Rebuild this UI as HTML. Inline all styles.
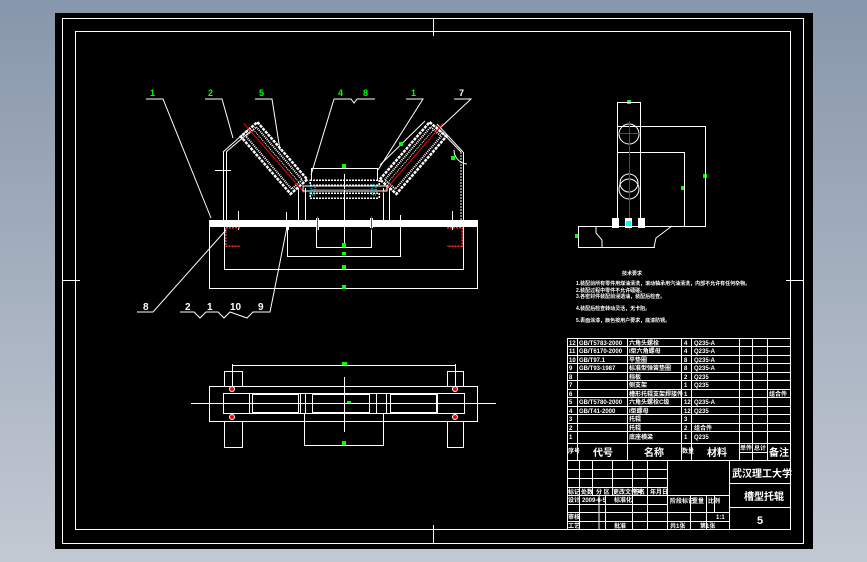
<!DOCTYPE html>
<html><head><meta charset="utf-8">
<style>
html,body{margin:0;padding:0;width:867px;height:562px;overflow:hidden;background:linear-gradient(#8797ab,#c3c9d3);}
svg{position:absolute;left:0;top:0;}
text{font-family:"Liberation Sans","Noto Sans CJK SC",sans-serif;font-weight:bold;}
</style></head><body>
<svg width="867" height="562" viewBox="0 0 867 562" xmlns="http://www.w3.org/2000/svg">
<rect x="55" y="13" width="758" height="536" fill="#000"/>
<g fill="none" stroke="#fff" stroke-width="1" shape-rendering="crispEdges">
<rect x="62.5" y="18.5" width="741" height="525"/>
<rect x="75.5" y="31.5" width="715" height="498"/>
<line x1="433.5" y1="18" x2="433.5" y2="36"/>
<line x1="433.5" y1="525" x2="433.5" y2="544"/>
<line x1="62" y1="280.5" x2="80" y2="280.5"/>
<line x1="786" y1="280.5" x2="804" y2="280.5"/>

<rect x="209.5" y="220.5" width="268" height="6" fill="#fff"/>
<line x1="209.5" y1="227" x2="209.5" y2="289"/>
<line x1="477.5" y1="227" x2="477.5" y2="289"/>
<line x1="209" y1="288.5" x2="478" y2="288.5"/>
<line x1="224.5" y1="227" x2="224.5" y2="270"/>
<line x1="463.5" y1="227" x2="463.5" y2="270"/>
<line x1="224" y1="269.5" x2="464" y2="269.5"/>
<line x1="287.5" y1="227" x2="287.5" y2="257"/>
<line x1="400.5" y1="215" x2="400.5" y2="257"/>
<line x1="287" y1="256.5" x2="401" y2="256.5"/>
<line x1="316.5" y1="227" x2="316.5" y2="248"/>
<line x1="371.5" y1="227" x2="371.5" y2="248"/>
<line x1="316" y1="247.5" x2="372" y2="247.5"/>
<line x1="344.5" y1="174" x2="344.5" y2="246"/>
<line x1="223.5" y1="152" x2="223.5" y2="220"/>
<line x1="226.5" y1="152" x2="226.5" y2="220"/>
<line x1="463.5" y1="152" x2="463.5" y2="220"/>
<line x1="461" y1="152" x2="461" y2="220" stroke-dasharray="2 1"/>
<line x1="215" y1="170.5" x2="231" y2="170.5"/>
<line x1="298.5" y1="188" x2="298.5" y2="220"/>
<line x1="305.5" y1="188" x2="305.5" y2="220"/>
<line x1="383.5" y1="188" x2="383.5" y2="220"/>
<line x1="389.5" y1="188" x2="389.5" y2="220"/>
<line x1="311.5" y1="168" x2="311.5" y2="180"/>
<line x1="311" y1="168.5" x2="378" y2="168.5"/>
<line x1="377.5" y1="168" x2="377.5" y2="180"/>
<line x1="238.5" y1="211" x2="238.5" y2="230"/>
<line x1="452.5" y1="211" x2="452.5" y2="230"/>
<line x1="286.5" y1="212" x2="286.5" y2="230"/>
</g>
<g fill="none" stroke="#fff" stroke-width="1">
<polyline points="223,152 250,128"/>
<polyline points="226,152 252,130"/>
<polyline points="463,152 437,124"/>
<polyline points="461,152 436,126"/>
<polyline points="380,165 425,121"/>
<polyline points="146,99 163,99 211,218"/>
<polyline points="205,99 222,99 233,138"/>
<polyline points="255,99 272,99 280,150"/>
<polyline points="334,99 351,99 354,103 357,99 375,99"/>
<polyline points="334,99 311,175"/>
<polyline points="406,99 423,99 378,170"/>
<polyline points="454,99 471,99 440,128"/>
<polyline points="137,312 153,312 226,230"/>
<polyline points="180,312 194,312 200,318 206,312 218,312 224,318 230,312 247,318 253,312 270,312 287,227"/>
<path d="M454,150 a14,14 0 0 0 13,14"/>
</g>
<g transform="translate(274,158) rotate(49)">
<rect x="-38" y="-11" width="76" height="22" fill="none" stroke="#fff" stroke-width="2.5" stroke-dasharray="3 1"/>
<rect x="-35" y="-7" width="70" height="14" fill="none" stroke="#fff" stroke-width="2" stroke-dasharray="1 1"/>
<line x1="-35" y1="-3" x2="35" y2="-3" stroke="#fff" stroke-width="1" stroke-dasharray="1 1"/>
<line x1="-46" y1="0" x2="46" y2="0" stroke="#f00" stroke-width="1"/>
</g>
<g transform="translate(413,158) rotate(-49)">
<rect x="-38" y="-11" width="76" height="22" fill="none" stroke="#fff" stroke-width="2.5" stroke-dasharray="3 1"/>
<rect x="-35" y="-7" width="70" height="14" fill="none" stroke="#fff" stroke-width="2" stroke-dasharray="1 1"/>
<line x1="-35" y1="-3" x2="35" y2="-3" stroke="#fff" stroke-width="1" stroke-dasharray="1 1"/>
<line x1="-46" y1="0" x2="46" y2="0" stroke="#f00" stroke-width="1"/>
</g>
<g shape-rendering="crispEdges">
<rect x="310" y="180" width="69" height="5" fill="none" stroke="#fff" stroke-width="1.5" stroke-dasharray="2 1"/>
<rect x="310" y="193" width="69" height="5" fill="none" stroke="#fff" stroke-width="1.5" stroke-dasharray="2 1"/>
<rect x="303" y="186" width="84" height="5" fill="none" stroke="#fff"/>
<line x1="311" y1="189.5" x2="377" y2="189.5" stroke="#f00"/>
<rect x="311" y="185" width="4" height="10" fill="none" stroke="#0ff" stroke-dasharray="1 1"/>
<rect x="372" y="185" width="4" height="10" fill="none" stroke="#0ff" stroke-dasharray="1 1"/>
<path d="M240,227.5 H225.5 V246 H240" fill="none" stroke="#f33" stroke-width="1.5" stroke-dasharray="2 1"/>
<path d="M447,227.5 H462 V246 H447" fill="none" stroke="#f33" stroke-width="1.5" stroke-dasharray="2 1"/>
<rect x="316" y="218" width="3" height="12" fill="#fff"/><line x1="317.5" y1="216" x2="317.5" y2="230" stroke="#f00"/>
<rect x="370" y="218" width="3" height="10" fill="#fff"/><line x1="371.5" y1="216" x2="371.5" y2="230" stroke="#f00"/>
<rect x="286" y="226" width="3" height="4" fill="#fff"/>
</g>
<g fill="#0f0">
<rect x="342" y="164" width="4" height="4"/><rect x="342" y="243" width="4" height="4"/>
<rect x="342" y="252" width="4" height="3"/><rect x="342" y="265" width="4" height="4"/>
<rect x="342" y="285" width="4" height="4"/><rect x="399" y="142" width="4" height="4"/>
<rect x="451" y="156" width="4" height="4"/>
<rect x="342" y="362" width="5" height="4"/><rect x="342" y="441" width="4" height="4"/>
<rect x="347" y="401" width="4" height="3"/>
<rect x="627" y="100" width="4" height="4"/><rect x="703" y="174" width="4" height="4"/>
<rect x="681" y="186" width="4" height="4"/><rect x="575" y="234" width="4" height="4"/>
</g>
<g fill="#0f0" font-size="9">
<text x="150" y="96">1</text><text x="208" y="96">2</text><text x="259" y="96">5</text>
<text x="338" y="96">4</text><text x="363" y="96">8</text><text x="411" y="96">1</text>
</g>
<text x="459" y="96" fill="#fff" font-size="9">7</text>
<g fill="#fff" font-size="10" font-weight="normal">
<text x="143" y="310">8</text><text x="185" y="310">2</text><text x="207" y="310">1</text>
<text x="230" y="310">10</text><text x="258" y="310">9</text>
</g>

<g fill="none" stroke="#fff" shape-rendering="crispEdges">
<rect x="209.5" y="386.5" width="268" height="35"/>
<rect x="223.5" y="393.5" width="241" height="20"/>
<polyline points="224.5,386 224.5,371.5 242.5,371.5 242.5,386"/>
<polyline points="224.5,422 224.5,447.5 242.5,447.5 242.5,422"/>
<polyline points="447.5,386 447.5,371.5 463.5,371.5 463.5,386"/>
<polyline points="447.5,422 447.5,447.5 463.5,447.5 463.5,422"/>
<line x1="191" y1="403.5" x2="496" y2="403.5"/>
<line x1="344.5" y1="377" x2="344.5" y2="432"/>
<line x1="232" y1="365.5" x2="455" y2="365.5"/>
<line x1="232.5" y1="364" x2="232.5" y2="386"/>
<line x1="455.5" y1="364" x2="455.5" y2="386"/>
<line x1="304" y1="445.5" x2="383" y2="445.5"/>
<line x1="304.5" y1="414" x2="304.5" y2="446"/>
<line x1="383.5" y1="414" x2="383.5" y2="446"/>
<rect x="249.5" y="393.5" width="51" height="20"/>
<rect x="252.5" y="394.5" width="46" height="18"/>
<rect x="305.5" y="393.5" width="71" height="20"/>
<rect x="312.5" y="394.5" width="57" height="18"/>
<rect x="386.5" y="393.5" width="51" height="20"/>
<rect x="390.5" y="394.5" width="46" height="18"/>
</g>
<g fill="#f00" stroke="#fff" stroke-width="1">
<circle cx="232" cy="389" r="2.5"/><circle cx="232" cy="417" r="2.5"/>
<circle cx="455" cy="389" r="2.5"/><circle cx="455" cy="417" r="2.5"/>
</g>

<g fill="none" stroke="#fff" shape-rendering="crispEdges">
<rect x="617.5" y="102.5" width="23" height="124"/>
<line x1="617" y1="126.5" x2="706" y2="126.5"/>
<line x1="705.5" y1="126" x2="705.5" y2="227"/>
<line x1="617" y1="152.5" x2="685" y2="152.5"/>
<line x1="684.5" y1="152" x2="684.5" y2="227"/>
<line x1="578" y1="226.5" x2="706" y2="226.5"/>
<line x1="578" y1="247.5" x2="655" y2="247.5"/>
<line x1="578.5" y1="226" x2="578.5" y2="248"/>
</g>
<g fill="none" stroke="#fff">
<circle cx="629" cy="134" r="10"/>
<circle cx="629" cy="183" r="9"/>
<circle cx="629" cy="189" r="10"/>
<polyline points="596,226 596,233 602,240 602,247"/>
<polyline points="672,226 664,232 656,238 654,247"/>
</g>
<line x1="629.5" y1="121" x2="629.5" y2="230" stroke="#f00"/>
<line x1="618" y1="133.5" x2="640" y2="133.5" stroke="#f00"/>
<g fill="#fff"><rect x="612" y="218" width="7" height="10"/><rect x="625" y="218" width="7" height="10"/><rect x="638" y="218" width="7" height="10"/></g>
<rect x="626" y="221" width="5" height="5" fill="#0ff"/>

<g fill="#fff" font-size="5">
<text x="622" y="275">技术要求</text>
<text x="576" y="285">1.装配前所有零件用煤油清洗，滚动轴承用汽油清洗，内部不允许有任何杂物。</text>
<text x="576" y="292">2.装配过程中零件不允许磕碰。</text>
<text x="576" y="298">3.各密封件装配前浸透油，装配后检查。</text>
<text x="576" y="310">4.装配后检查转动灵活，无卡阻。</text>
<text x="576" y="322">5.表面涂漆，颜色按用户要求，底漆防锈。</text>
</g>

<g fill="none" stroke="#fff" shape-rendering="crispEdges">
<rect x="567.5" y="338.5" width="223" height="191"/>
<line x1="567" y1="346.5" x2="791" y2="346.5"/>
<line x1="567" y1="355.5" x2="791" y2="355.5"/>
<line x1="567" y1="363.5" x2="791" y2="363.5"/>
<line x1="567" y1="372.5" x2="791" y2="372.5"/>
<line x1="567" y1="380.5" x2="791" y2="380.5"/>
<line x1="567" y1="389.5" x2="791" y2="389.5"/>
<line x1="567" y1="397.5" x2="791" y2="397.5"/>
<line x1="567" y1="406.5" x2="791" y2="406.5"/>
<line x1="567" y1="414.5" x2="791" y2="414.5"/>
<line x1="567" y1="423.5" x2="791" y2="423.5"/>
<line x1="567" y1="431.5" x2="791" y2="431.5"/>
<line x1="567" y1="443.5" x2="791" y2="443.5"/>
<line x1="739" y1="452.5" x2="767" y2="452.5"/>
<line x1="567" y1="460.5" x2="791" y2="460.5"/>
<line x1="577.5" y1="338" x2="577.5" y2="460"/>
<line x1="627.5" y1="338" x2="627.5" y2="460"/>
<line x1="681.5" y1="338" x2="681.5" y2="460"/>
<line x1="691.5" y1="338" x2="691.5" y2="460"/>
<line x1="739.5" y1="338" x2="739.5" y2="460"/>
<line x1="752.5" y1="338" x2="752.5" y2="460"/>
<line x1="767.5" y1="338" x2="767.5" y2="460"/>
<line x1="667.5" y1="460" x2="667.5" y2="530"/>
<line x1="729.5" y1="460" x2="729.5" y2="530"/>
<line x1="729" y1="483.5" x2="791" y2="483.5"/>
<line x1="729" y1="507.5" x2="791" y2="507.5"/>
<line x1="567" y1="469.5" x2="667" y2="469.5"/>
<line x1="567" y1="478.5" x2="667" y2="478.5"/>
<line x1="567" y1="487.5" x2="667" y2="487.5"/>
<line x1="567" y1="495.5" x2="667" y2="495.5"/>
<line x1="567" y1="504.5" x2="667" y2="504.5"/>
<line x1="567" y1="512.5" x2="667" y2="512.5"/>
<line x1="567" y1="521.5" x2="667" y2="521.5"/>
<line x1="667" y1="495.5" x2="729" y2="495.5"/>
<line x1="667" y1="512.5" x2="729" y2="512.5"/>
<line x1="667" y1="521.5" x2="729" y2="521.5"/>
<line x1="579.5" y1="460" x2="579.5" y2="530"/>
<line x1="592.5" y1="460" x2="592.5" y2="495"/>
<line x1="612.5" y1="460" x2="612.5" y2="495"/>
<line x1="632.5" y1="460" x2="632.5" y2="530"/>
<line x1="647.5" y1="460" x2="647.5" y2="530"/>
<line x1="605.5" y1="495" x2="605.5" y2="530"/>
<line x1="599" y1="496" x2="599" y2="530"/>
<line x1="690.5" y1="495" x2="690.5" y2="530"/>
<line x1="706.5" y1="495" x2="706.5" y2="530"/>
<line x1="714.5" y1="495" x2="714.5" y2="512"/>
</g>
<g fill="#fff" font-size="6">
<text x="569" y="345">12</text><text x="579" y="345">GB/T5783-2000</text><text x="629" y="345">六角头螺栓</text><text x="684" y="345">4</text><text x="694" y="345">Q235-A</text>
<text x="569" y="353">11</text><text x="579" y="353">GB/T6170-2000</text><text x="629" y="353">I型六角螺母</text><text x="684" y="353">4</text><text x="694" y="353">Q235-A</text>
<text x="569" y="362">10</text><text x="579" y="362">GB/T97.1</text><text x="629" y="362">平垫圈</text><text x="684" y="362">8</text><text x="694" y="362">Q235-A</text>
<text x="569" y="370">9</text><text x="579" y="370">GB/T93-1987</text><text x="629" y="370">标准型弹簧垫圈</text><text x="684" y="370">8</text><text x="694" y="370">Q235-A</text>
<text x="569" y="379">8</text><text x="629" y="379">挡板</text><text x="684" y="379">2</text><text x="694" y="379">Q235</text>
<text x="569" y="387">7</text><text x="629" y="387">侧支架</text><text x="684" y="387">1</text><text x="694" y="387">Q235</text>
<text x="569" y="396">6</text><text x="629" y="396">槽形托辊支架焊接件</text><text x="684" y="396">1</text><text x="769" y="396">组合件</text>
<text x="569" y="404">5</text><text x="579" y="404">GB/T5780-2000</text><text x="629" y="404">六角头螺栓C级</text><text x="684" y="404">12</text><text x="694" y="404">Q235-A</text>
<text x="569" y="413">4</text><text x="579" y="413">GB/T41-2000</text><text x="629" y="413">I型螺母</text><text x="684" y="413">12</text><text x="694" y="413">Q235</text>
<text x="569" y="421">3</text><text x="629" y="421">托辊</text><text x="684" y="421">3</text>
<text x="569" y="430">2</text><text x="629" y="430">托辊</text><text x="684" y="430">2</text><text x="694" y="430">组合件</text>
<text x="569" y="439">1</text><text x="629" y="439">底座横梁</text><text x="684" y="439">1</text><text x="694" y="439">Q235</text>
</g>
<g fill="#fff" font-size="10">
<text x="593" y="456">代号</text><text x="644" y="456">名称</text><text x="707" y="456">材料</text><text x="769" y="456">备注</text>
</g>
<g fill="#fff" font-size="6">
<text x="568" y="453">序号</text><text x="682" y="453">数量</text><text x="740" y="450">单件</text><text x="754" y="450">总计</text>
<text x="568" y="494">标记</text><text x="581" y="494">处数</text><text x="596" y="494">分 区</text><text x="613" y="494">更改文件号</text><text x="633" y="494">签名</text><text x="650" y="494">年月日</text>
<text x="568" y="502">设计</text><text x="582" y="502">2009-6-5</text><text x="614" y="502">标准化</text>
<text x="568" y="519">审核</text><text x="568" y="528">工艺</text><text x="614" y="528">批准</text>
<text x="670" y="503">阶段标记</text><text x="692" y="503">重量</text><text x="708" y="503">比例</text>
<text x="716" y="519">1:1</text>
<text x="670" y="528">共1张</text><text x="700" y="528">第1张</text>
</g>
<g fill="#fff" font-size="10">
<text x="732" y="477">武汉理工大学</text>
<text x="744" y="500">槽型托辊</text>
</g>
<text x="757" y="524" fill="#fff" font-size="11" font-weight="normal">5</text>
</svg>
</body></html>
